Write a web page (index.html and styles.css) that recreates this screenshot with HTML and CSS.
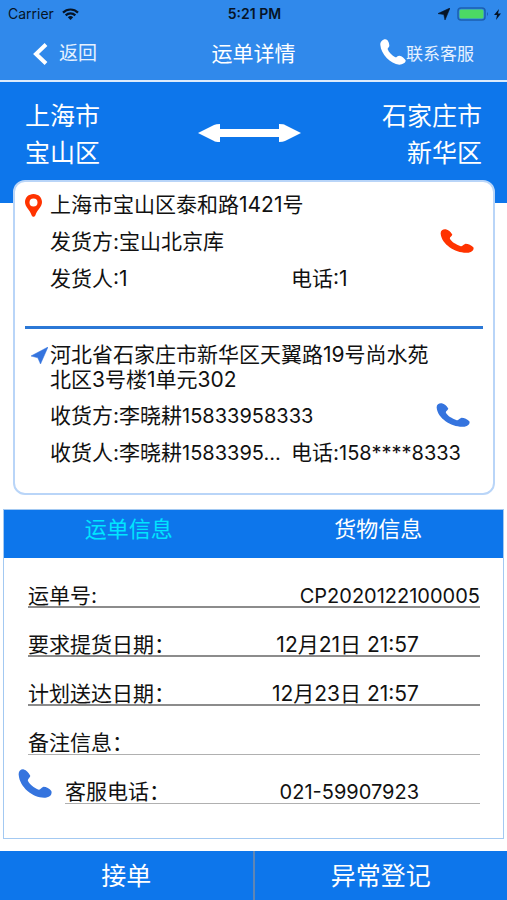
FILE: index.html
```html
<!DOCTYPE html>
<html lang="zh-CN">
<head>
<meta charset="utf-8">
<meta name="viewport" content="width=device-width, initial-scale=1">
<title>运单详情</title>
<link rel="stylesheet" href="styles.css">
</head>
<body>
<svg class="defs" aria-hidden="true">
  <symbol id="phone" viewBox="0 0 100 70" preserveAspectRatio="none">
    <path d="M2 14C1 4 9 0 17 1C25 3 31 8 36 16C37 20 28 23 29 28C33 37 47 46 61 50C66 51 68 45 75 43C83 43 93 48 98 53C101 59 96 67 84 69C50 73 5 47 2 14Z"/>
  </symbol>
</svg>
<div class="screen">
  <header class="top">
    <div class="status">
      <div class="status-left">
        <span>Carrier</span>
        <svg class="wifi" viewBox="0 0 17 12" aria-hidden="true"><path d="M1 4.6a10.6 10.6 0 0 1 15 0M3.7 7.4a6.8 6.8 0 0 1 9.6 0" fill="none" stroke="currentColor" stroke-width="2.2"/><path d="M8.500 12 5.800 9.300a3.800 3.800 0 0 1 5.400 0Z" fill="currentColor"/></svg>
      </div>
      <span class="clock">5:21 PM</span>
      <div class="status-right">
        <svg class="locate" viewBox="0 0 12 12" aria-hidden="true"><path d="M12 0 7 12 5.800 6.500 0 5.600Z" fill="currentColor" stroke="currentColor" stroke-width=".6"/></svg>
        <svg class="battery" viewBox="0 0 32 14" aria-hidden="true"><rect x="1" y="1" width="27" height="12" rx="3" fill="none" stroke="#1c5fb0" stroke-width="1.500"/><rect x="2.500" y="2.500" width="24" height="9" rx="1.500" fill="#4cd964"/><path d="M30 5v4q2-2 0-4" fill="#1c5fb0"/></svg>
        <svg class="bolt" viewBox="0 0 7 11" aria-hidden="true"><path d="M5 0 0 6h3L2 11l5-6.500H4Z" fill="currentColor"/></svg>
      </div>
    </div>
    <nav class="nav">
      <a class="back" href="#"><svg class="chevron" viewBox="0 0 15 22" aria-hidden="true"><path d="M13 1.500 3 11l10 9.500" fill="none" stroke="currentColor" stroke-width="4"/></svg>返回</a>
      <h1 class="title">运单详情</h1>
      <a class="service" href="#"><svg class="service-phone" viewBox="0 0 78 78" aria-hidden="true"><path d="M1 18C0 9 8 1 16 1C23 1 27 10 28 19C29 25 22 27 23 31C27 41 36 50 46 55C51 55 52 50 58 50C66 51 74 58 77 64C78 71 68 77 58 77C31 74 3 46 1 18Z" fill="currentColor"/></svg>联系客服</a>
    </nav>
  </header>

  <section class="route">
    <p class="place">上海市<br>宝山区</p>
    <svg class="arrow" viewBox="0 0 103 18" aria-hidden="true"><path d="M0 9 16 1q2-1 6-1v5h59V0q5 0 6 1l16 8-16 8q-2 1-6 1v-5H22v5q-5 0-6-1Z" fill="#fff"/></svg>
    <p class="place place-end">石家庄市<br>新华区</p>
  </section>

  <section class="card">
    <div class="party">
      <svg class="pin" viewBox="0 0 17 23" aria-hidden="true"><path fill-rule="evenodd" d="M8.500 0C3.500 0 0 3.600 0 8c0 5 5 8 6.500 13 .7 2.400 3.300 2.400 4 0C12 16 17 13 17 8c0-4.400-3.500-8-8.500-8Zm0 4.500a4 4 0 1 1 0 8 4 4 0 0 1 0-8Z" fill="#ff3300"/></svg>
      <div class="lines">
        <p>上海市宝山区泰和路1421号</p>
        <div class="line"><span>发货方:宝山北京库</span><a class="call call-red" href="tel:1" aria-label="拨打发货方电话"><svg><use href="#phone"/></svg></a></div>
        <div class="line pair"><span>发货人:1</span><span>电话:1</span></div>
      </div>
    </div>
    <div class="party receiver">
      <svg class="plane" viewBox="0 0 17 17" aria-hidden="true"><path d="M17 0 9.500 17 6.800 10.800 0 9Z" fill="#3574de" stroke="#3574de" stroke-width=".5"/></svg>
      <div class="lines">
        <p class="address">河北省石家庄市新华区天翼路19号尚水苑北区3号楼1单元302</p>
        <div class="line"><span>收货方:李晓耕<span class="num">15833958333</span></span><a class="call" href="tel:15833958333" aria-label="拨打收货方电话"><svg><use href="#phone"/></svg></a></div>
        <div class="line pair"><span>收货人:李晓耕<span class="num">1583395...</span></span><span>电话:<span class="num">158****8333</span></span></div>
      </div>
    </div>
  </section>

  <section class="panel">
    <div class="tabs" role="tablist">
      <button class="tab active" role="tab" aria-selected="true">运单信息</button>
      <button class="tab" role="tab" aria-selected="false">货物信息</button>
    </div>
    <dl class="fields">
      <div class="field field-full"><dt>运单号:</dt><dd class="num">CP2020122100005</dd></div>
      <div class="field"><dt>要求提货日期：</dt><dd>12月21日 21:57</dd></div>
      <div class="field"><dt>计划送达日期：</dt><dd>12月23日 21:57</dd></div>
      <div class="field field-light"><dt>备注信息：</dt><dd></dd></div>
      <div class="contact">
        <a class="call" href="tel:02159907923" aria-label="拨打客服电话"><svg><use href="#phone"/></svg></a>
        <div class="field field-light"><dt>客服电话：</dt><dd class="num">021-59907923</dd></div>
      </div>
    </dl>
  </section>

  <footer class="actions">
    <button class="action">接单</button>
    <button class="action">异常登记</button>
  </footer>
</div>
</body>
</html>
```
FILE: styles.css
```css
* { box-sizing: border-box; }

body {
  margin: 0;
  background: #fff;
  color: #111;
  font-family: Inter, "Noto Sans CJK SC", sans-serif;
  font-size: 21px;
  line-height: 26px;
}

p, h1, dl, dd { margin: 0; }
a { color: inherit; text-decoration: none; }
svg { display: block; flex: none; }
button { border: 0; padding: 0; font: inherit; color: #fff; background: #0d76eb; }

.defs { position: absolute; width: 0; height: 0; }
.num { font-size: 20px; }

.screen {
  display: flex;
  flex-direction: column;
  min-height: 100vh;
}

.top {
  background: #3089eb;
  border-bottom: 2px solid #dcebfc;
}

.status {
  display: grid;
  grid-template-columns: 1fr auto 1fr;
  align-items: center;
  height: 28px;
  padding: 0 6px 0 8px;
  color: #061426;
  font-size: 14px;
  line-height: 20px;
}
.status-left, .status-right { display: flex; align-items: center; }
.status-left { gap: 8px; }
.status-right { justify-content: flex-end; gap: 5px; }
.clock { font-weight: 600; }
.wifi { width: 17px; height: 12px; }
.locate { width: 12px; height: 12px; margin-right: 2px; }
.battery { width: 32px; height: 14px; }
.bolt { width: 7px; height: 11px; }

.nav {
  display: grid;
  grid-template-columns: 1fr auto 1fr;
  align-items: center;
  height: 52px;
  padding: 0 33px;
  color: #fff;
}
.back, .service { display: flex; align-items: center; color: #e6f1ff; }
.back { gap: 11px; font-size: 19px; }
.chevron { width: 15px; height: 22px; color: #fff; }
.title { font-size: 21px; font-weight: 400; }
.service { justify-content: flex-end; font-size: 17px; }
.service-phone { width: 26px; height: 26px; margin-bottom: 4px; color: #fff; }

.route {
  display: grid;
  grid-template-columns: 1fr auto 1fr;
  align-items: center;
  padding: 16px 25px 31px;
  background: #0d76eb;
  color: #fff;
}
.place { font-size: 25px; line-height: 37px; }
.place-end { text-align: right; }
.arrow { width: 103px; height: 18px; margin: 0 8px 4px 0; }

.card {
  margin: -23px 12px 0 13px;
  padding: 0 10px;
  border: 2px solid #b9d5f8;
  border-radius: 12px;
  background: #fff;
}
.party {
  display: grid;
  grid-template-columns: 25px 1fr;
  padding: 10px 0 34px;
}
.receiver {
  padding: 13px 0 27px;
  border-top: 3px solid #2b78d6;
}
.lines { display: grid; gap: 11px; min-width: 0; }
.address { max-width: 390px; line-height: 25px; }
.line { display: flex; justify-content: space-between; white-space: nowrap; }
.pair { display: grid; grid-template-columns: 241px 1fr; }
.pin { width: 17px; height: 23px; margin-top: 2px; }
.plane { width: 17px; height: 17px; margin: 5px 0 0 6px; }

.call { margin-right: 13px; color: #3574de; }
.call svg { width: 34px; height: 24px; fill: currentColor; }
.call-red { margin-right: 9px; color: #ff3300; }

.panel {
  margin: 14px 3px 12px;
  border: 1px solid #a3c9f2;
}
.tabs { display: grid; grid-template-columns: 1fr 1fr; }
.tab { padding-bottom: 10px; font-size: 22px; line-height: 38px; }
.active { color: #00e5ff; }

.fields { padding: 1px 23px 34px 24px; }
.field {
  display: flex;
  justify-content: space-between;
  height: 49px;
  padding: 24px 61px 0 0;
  border-bottom: 2px solid #8c8c8c;
  line-height: 26px;
  white-space: nowrap;
}
.field-full { padding-right: 0; }
.field-light { border-bottom: 1px solid #b0b0b0; }
.contact { display: flex; margin-left: -10px; }
.contact .field { flex: 1; }
.contact .call { align-self: flex-end; width: 34px; padding-bottom: 6px; }
.contact .call svg { height: 29px; }

.actions {
  display: grid;
  grid-template-columns: 1fr 1fr;
  gap: 2px;
  margin-top: auto;
  background: #5f86b5;
}
.action { padding-top: 2px; font-size: 25px; line-height: 47px; }
```
